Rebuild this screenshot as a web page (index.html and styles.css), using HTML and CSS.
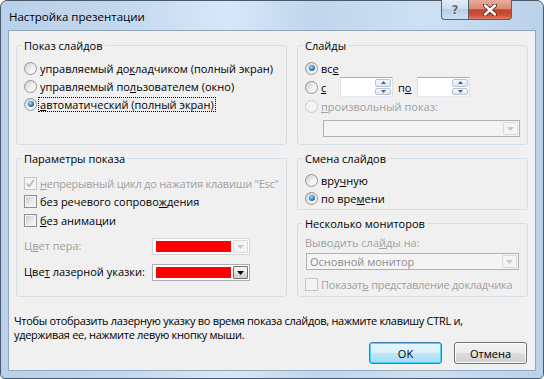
FILE: index.html
```html
<!DOCTYPE html>
<html lang="ru">
<head>
  <meta charset="UTF-8">
  <title>Настройка презентации</title>
  <link rel="stylesheet" href="styles.css">
</head>
<body>
  <div class="window">
    <div class="titlebar">
      <span class="title">Настройка презентации</span>
      <div class="caption">
        <span class="cap-btn cap-help">?</span>
        <span class="cap-btn cap-close">
          <svg width="14" height="12" viewBox="0 0 14 12">
            <path d="M2 1.5 L12 10.5 M12 1.5 L2 10.5" stroke="#5a2418" stroke-width="4.2" stroke-linecap="round"/>
            <path d="M2 1.5 L12 10.5 M12 1.5 L2 10.5" stroke="#fff" stroke-width="2.4" stroke-linecap="round"/>
          </svg>
        </span>
      </div>
    </div>

    <div class="client">
      <div class="groups">
        <div class="col col-left">
          <!-- Показ слайдов -->
          <fieldset class="group show-type">
            <legend>Показ слайдов</legend>
            <div class="opt"><span class="radio"></span><span>управляемый до<u>к</u>ладчиком (полный экран)</span></div>
            <div class="opt"><span class="radio"></span><span>управляемый по<u>л</u>ьзователем (окно)</span></div>
            <div class="opt"><span class="radio on"></span><span class="focus"><u>а</u>втоматический (полный экран)</span></div>
          </fieldset>

          <!-- Параметры показа -->
          <fieldset class="group params">
            <legend>Параметры показа</legend>
            <div class="opt opt-half disabled">
              <span class="check disabled">
                <svg width="11" height="11" viewBox="0 0 11 11"><path d="M2 5.5 L4.3 8.3 L9 1.8" fill="none" stroke="#b4b4b4" stroke-width="1.6"/></svg>
              </span>
              <span class="tight"><u>н</u>епрерывный цикл до нажатия клавиши "Esc"</span>
            </div>
            <div class="opt opt-half"><span class="check"></span><span>без речевого сопрово<u>ж</u>дения</span></div>
            <div class="opt opt-half"><span class="check"></span><span><u>б</u>ез анимации</span></div>

            <div class="color-row pen">
              <span class="color-label disabled">Ц<u>в</u>ет пера:</span>
              <span class="color-box disabled">
                <span class="swatch"></span>
                <span class="drop">
                  <svg width="7" height="4" viewBox="0 0 7 4"><path d="M0 0 H7 L3.5 4 Z" fill="#c8c8c8"/></svg>
                </span>
              </span>
            </div>
            <div class="color-row laser">
              <span class="color-label">Цве<u>т</u> лазерной указки:</span>
              <span class="color-box">
                <span class="swatch"></span>
                <span class="drop drop-on">
                  <svg width="7" height="4" viewBox="0 0 7 4"><path d="M0 0 H7 L3.5 4 Z" fill="#000"/></svg>
                </span>
              </span>
            </div>
          </fieldset>
        </div>

        <div class="col col-right">
          <!-- Слайды -->
          <fieldset class="group slides">
            <legend>Слайды</legend>
            <div class="opt"><span class="radio on"></span><span>вс<u>е</u></span></div>
            <div class="opt opt-range">
              <span class="radio"></span>
              <span class="lbl-from"><u>с</u></span>
              <span class="spin">
                <span class="spin-btns">
                  <span class="spin-btn"><svg width="5" height="3" viewBox="0 0 5 3"><path d="M0 3 H5 L2.5 0 Z" fill="#4d6185"/></svg></span>
                  <span class="spin-btn"><svg width="5" height="3" viewBox="0 0 5 3"><path d="M0 0 H5 L2.5 3 Z" fill="#4d6185"/></svg></span>
                </span>
              </span>
              <span class="lbl-to">п<u>о</u></span>
              <span class="spin">
                <span class="spin-btns">
                  <span class="spin-btn"><svg width="5" height="3" viewBox="0 0 5 3"><path d="M0 3 H5 L2.5 0 Z" fill="#4d6185"/></svg></span>
                  <span class="spin-btn"><svg width="5" height="3" viewBox="0 0 5 3"><path d="M0 0 H5 L2.5 3 Z" fill="#4d6185"/></svg></span>
                </span>
              </span>
            </div>
            <div class="opt opt-custom disabled"><span class="radio disabled"></span><span><u>п</u>роизвольный показ:</span></div>
            <div class="combo combo-custom">
              <span class="drop">
                <svg width="7" height="4" viewBox="0 0 7 4"><path d="M0 0 H7 L3.5 4 Z" fill="#c8c8c8"/></svg>
              </span>
            </div>
          </fieldset>

          <!-- Смена слайдов -->
          <fieldset class="group advance">
            <legend>Смена слайдов</legend>
            <div class="opt"><span class="radio"></span><span>вру<u>ч</u>ную</span></div>
            <div class="opt"><span class="radio on"></span><span>по вре<u>м</u>ени</span></div>
          </fieldset>

          <!-- Несколько мониторов -->
          <fieldset class="group monitors">
            <legend>Несколько мониторов</legend>
            <div class="mon-label disabled">Выводить сла<u>й</u>ды на:</div>
            <div class="combo combo-monitor">
              <span class="combo-text">Основной монитор</span>
              <span class="drop">
                <svg width="7" height="4" viewBox="0 0 7 4"><path d="M0 0 H7 L3.5 4 Z" fill="#c8c8c8"/></svg>
              </span>
            </div>
            <div class="opt opt-presenter disabled"><span class="check disabled"></span><span class="tight">Показат<u>ь</u> представление докладчика</span></div>
          </fieldset>
        </div>
      </div>

      <p class="hint">Чтобы отобразить лазерную указку во время показа слайдов, нажмите клавишу CTRL и,<br>удерживая ее, нажмите левую кнопку мыши.</p>

      <div class="buttons">
        <button class="btn btn-default">OK</button>
        <button class="btn">Отмена</button>
      </div>
    </div>
  </div>
</body>
</html>
```

FILE: styles.css
```css
body {
  margin: 0;
  font-family: "Open Sans", "Noto Sans", sans-serif;
  font-size: 11px;
  color: #000;
  background: #fff;
}
u {
  text-underline-offset: 1px;
}
.disabled {
  color: #a0a0a0;
}
.tight {
  letter-spacing: -0.25px;
}

/* окно */
.window {
  width: 544px;
  height: 379px;
  box-sizing: border-box;
  border: 1px solid #4b5869;
  border-radius: 7px 7px 5px 5px;
  padding: 0 7px 7px 7px;
  display: flex;
  flex-direction: column;
  background: linear-gradient(90deg, #b8d0e9 0%, #c3d8ee 22%, #d7e7f7 42%, #c0d6ed 58%, #cde0f3 78%, #bad1ea 100%);
}
.titlebar {
  height: 29px;
  display: flex;
  align-items: flex-start;
}
.title {
  margin: 8px 0 0 1px;
  font-size: 11.5px;
  line-height: 16px;
}
.caption {
  margin: -1px 24px 0 auto;
  display: flex;
}
.cap-btn {
  height: 20px;
  box-sizing: border-box;
  border: 1px solid #56606e;
  border-top: none;
  display: flex;
  align-items: center;
  justify-content: center;
}
.cap-help {
  width: 27px;
  border-right: none;
  border-radius: 0 0 0 4px;
  background: linear-gradient(#e3ecf6, #cddcee 45%, #b8cde4 50%, #cfdff0);
  color: #666;
  font: bold 12px "DejaVu Sans", sans-serif;
  text-shadow: 0 0 2px #fff;
}
.cap-close {
  width: 44px;
  border-radius: 0 0 4px 0;
  background: linear-gradient(#e9ab9b, #d98b77 45%, #c5422b 52%, #cf5038 80%, #e07f66);
}

/* клиентская область */
.client {
  flex: 1;
  background: #f0f0f0;
  border: 1px solid #92a6be;
  padding: 7px 7px 5px 5px;
  display: flex;
  flex-direction: column;
}
.groups {
  display: flex;
  gap: 10px;
  padding-left: 2px;
}
.col {
  display: flex;
  flex-direction: column;
  gap: 6px;
}
.col-left {
  width: 271px;
}
.col-right {
  width: 231px;
}
.group {
  margin: 0;
  padding: 0 6px 0 7px;
  border: 1px solid #d5dfe5;
  border-radius: 3px;
  box-sizing: border-box;
  min-width: 0;
}
.group legend {
  padding: 0 2px;
  margin-left: -2px;
  line-height: 15px;
}
.show-type {
  height: 107px;
  padding-top: 6px;
}
.params {
  height: 146px;
  padding-top: 8px;
}
.slides {
  height: 107px;
  padding-top: 6px;
}
.advance {
  height: 59px;
  padding-top: 5px;
}
.monitors {
  height: 81px;
  padding-top: 4px;
}

/* переключатели и флажки */
.opt {
  display: flex;
  align-items: center;
  height: 18px;
  white-space: nowrap;
}
.opt-half {
  height: 18.5px;
}
.radio {
  flex: none;
  width: 13px;
  height: 13px;
  margin-right: 3px;
  box-sizing: border-box;
  border-radius: 50%;
  border: 1px solid #939393;
  background: linear-gradient(135deg, #cfcfcf, #f2f2f2 60%, #ffffff);
  position: relative;
}
.radio.on::after {
  content: "";
  position: absolute;
  inset: 2.5px;
  border-radius: 50%;
  background: radial-gradient(circle at 40% 35%, #a6ddff, #2a78c2 55%, #0e3d6e);
}
.radio.disabled {
  border-color: #c9c9c9;
  background: #f4f4f4;
}
.check {
  flex: none;
  width: 13px;
  height: 13px;
  margin-right: 3px;
  box-sizing: border-box;
  border: 1px solid #8f8f8f;
  background: linear-gradient(135deg, #c9c9c9, #ececec 60%, #fbfbfb);
  box-shadow: inset 0 0 0 1px #f4f4f4;
  display: flex;
  align-items: center;
  justify-content: center;
}
.check.disabled {
  border-color: #c5c5c5;
  background: #f4f4f4;
  box-shadow: none;
}
.focus {
  outline: 1px dotted #000;
  outline-offset: 0;
  padding: 0 1px;
  margin-left: -1px;
  line-height: 13px;
}

/* диапазон слайдов */
.opt-range {
  height: 20px;
}
.lbl-from {
  width: 19px;
}
.lbl-to {
  width: 24px;
  padding-left: 5px;
  box-sizing: border-box;
}
.spin {
  width: 53px;
  height: 20px;
  box-sizing: border-box;
  background: #fff;
  border: 1px solid #dbdfe6;
  border-top-color: #abadb3;
  border-bottom-color: #e3e9ef;
  display: flex;
  justify-content: flex-end;
  padding: 1px 1px 1px 0;
}
.spin-btns {
  width: 16px;
  display: flex;
  flex-direction: column;
  gap: 1px;
}
.spin-btn {
  flex: 1;
  box-sizing: border-box;
  border: 1px solid #b8c3d4;
  border-radius: 2px;
  background: linear-gradient(#f5f7fa, #e2e7ee);
  display: flex;
  align-items: center;
  justify-content: center;
}
.opt-custom {
  height: 19px;
}

/* выпадающие списки */
.combo {
  height: 17px;
  box-sizing: border-box;
  border: 1px solid #adb2b5;
  background: #f4f4f4;
  display: flex;
  align-items: center;
  justify-content: flex-end;
  padding: 1px;
}
.combo-custom {
  width: 197px;
  margin: 4px 0 0 18px;
}
.combo-monitor {
  width: 213px;
  margin: 3px 0 0 1px;
  justify-content: space-between;
}
.combo-text {
  padding-left: 2px;
  color: #8d8d8d;
}
.drop {
  width: 15px;
  height: 100%;
  box-sizing: border-box;
  border: 1px solid #d8dbde;
  border-radius: 1px;
  background: #f4f4f4;
  display: flex;
  align-items: center;
  justify-content: center;
}
.drop-on {
  border-color: #707070;
  background: linear-gradient(#f2f2f2, #ebebeb 50%, #dddddd 51%, #cfcfcf);
}
.mon-label {
  line-height: 15px;
}
.opt-presenter {
  margin-top: 5px;
}

/* цвета */
.color-row {
  display: flex;
  align-items: center;
  height: 17px;
}
.pen {
  margin-top: 8.5px;
}
.laser {
  margin-top: 9px;
}
.color-label {
  width: 128px;
  margin-bottom: 3px;
}
.color-box {
  width: 98px;
  height: 17px;
  box-sizing: border-box;
  border: 1px solid #abadb3;
  background: #fff;
  display: flex;
  align-items: center;
  padding: 1px;
  gap: 2px;
}
.color-box.disabled {
  border-color: #d3d5d9;
}
.swatch {
  flex: 1;
  height: 11px;
  margin-left: 2px;
  background: #ff0000;
}

/* подсказка и кнопки */
.hint {
  margin: 17px 0 0 0;
  line-height: 14px;
  letter-spacing: -0.3px;
}
.buttons {
  display: flex;
  justify-content: flex-end;
  gap: 12px;
  padding-right: 1px;
}
.btn {
  width: 73px;
  height: 22px;
  font: inherit;
  color: #000;
  border: 1px solid #707070;
  border-radius: 3px;
  background: linear-gradient(#f2f2f2, #ebebeb 50%, #dddddd 51%, #cfcfcf);
  box-shadow: inset 0 0 0 1px #fcfcfc;
  padding: 0;
}
.btn-default {
  border-color: #3c7fb1;
  background: linear-gradient(#e8f5fc, #d9f0fc 50%, #bee6fd 51%, #a7d9f5);
  box-shadow: inset 0 0 0 1px #48d5fb;
}
```
